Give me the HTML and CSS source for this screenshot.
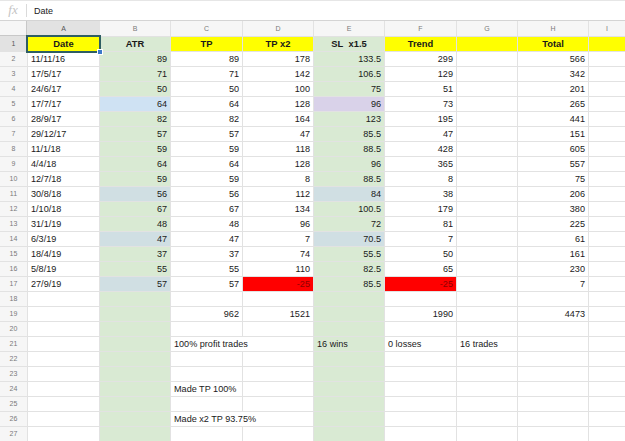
FILE: index.html
```html
<!DOCTYPE html>
<html lang="en">
  <head>
    <meta charset="UTF-8" />
    <meta name="viewport" content="width=device-width, initial-scale=1.0" />
    <title>Trades</title>
    <link rel="stylesheet" href="styles.css">
  </head>
  <body>
    <div class="formula-bar">
      <span class="fx">fx</span>
      <span class="formula-text">Date</span>
    </div>
    <div class="sheet"></div>
    <script>
      const cols = ["A", "B", "C", "D", "E", "F", "G", "H", "I"];

      const heading = ["Date", "ATR", "TP", "TP x2", "SL\u00a0\u00a0x1.5", "Trend", "", "Total", ""];

      const trades = [
        ["11/11/16", 89, 89, 178, 133.5, 299, "", 566],
        ["17/5/17", 71, 71, 142, 106.5, 129, "", 342],
        ["24/6/17", 50, 50, 100, 75, 51, "", 201],
        ["17/7/17", 64, 64, 128, 96, 73, "", 265],
        ["28/9/17", 82, 82, 164, 123, 195, "", 441],
        ["29/12/17", 57, 57, 47, 85.5, 47, "", 151],
        ["11/1/18", 59, 59, 118, 88.5, 428, "", 605],
        ["4/4/18", 64, 64, 128, 96, 365, "", 557],
        ["12/7/18", 59, 59, 8, 88.5, 8, "", 75],
        ["30/8/18", 56, 56, 112, 84, 38, "", 206],
        ["1/10/18", 67, 67, 134, 100.5, 179, "", 380],
        ["31/1/19", 48, 48, 96, 72, 81, "", 225],
        ["6/3/19", 47, 47, 7, 70.5, 7, "", 61],
        ["18/4/19", 37, 37, 74, 55.5, 50, "", 161],
        ["5/8/19", 55, 55, 110, 82.5, 65, "", 230],
        ["27/9/19", 57, 57, -25, 85.5, -25, "", 7],
      ];

      // summary block under the trades, keyed by row number
      const summary = {
        19: { C: 962, D: 1521, F: 1990, H: 4473 },
        21: { C: "100% profit trades", E: "16 wins", F: "0 losses", G: "16 trades" },
        24: { C: "Made TP 100%" },
        26: { C: "Made x2 TP 93.75%" },
      };

      // text that runs over the empty cell on its right
      const spans = { "21C": 2, "26C": 2 };

      const tones = {
        "5B": "blue",
        "11B": "slate",
        "14B": "slate",
        "17B": "slate",
        "5E": "lilac",
        "11E": "slate",
        "14E": "slate",
        "17D": "red",
        "17F": "red",
      };

      const sheet = document.querySelector(".sheet");

      const addCell = (text, cls) => {
        const cell = document.createElement("div");
        cell.className = cls;
        cell.textContent = text;
        sheet.appendChild(cell);
        return cell;
      };

      // column letters
      addCell("", "corner");
      cols.forEach((col) => addCell(col, col === "A" ? "col-head active" : "col-head"));

      for (let row = 1; row <= 27; row++) {
        addCell(row, row === 1 ? "row-head active" : "row-head");

        for (let i = 0; i < cols.length; i++) {
          const col = cols[i];
          const key = `${row}${col}`;
          let value = "";

          if (row === 1) {
            value = heading[i];
          } else if (row <= 17) {
            value = trades[row - 2][i] ?? "";
          } else if (summary[row]) {
            value = summary[row][col] ?? "";
          }

          let cls = "cell";
          if (row === 1) {
            cls += col === "B" || col === "E" ? " green title" : " yellow title";
          } else if (tones[key]) {
            cls += ` ${tones[key]}`;
          } else if (col === "B" || col === "E") {
            cls += " green";
          }
          if (typeof value === "number") cls += " num";
          if (spans[key]) cls += " span2";
          if (key === "1A") cls += " selected";

          addCell(value, cls);
          if (spans[key]) i += spans[key] - 1;
        }
      }
    </script>
  </body>
</html>
```

FILE: styles.css
```css
html,
body {
  margin: 0;
  background: #fff;
}
body {
  font-family: "Liberation Sans", Arial, sans-serif;
  overflow: hidden;
}

.formula-bar {
  box-sizing: border-box;
  height: 21px;
  border-top: 1px solid #e6e6e6;
  border-bottom: 1px solid #d4d4d4;
  display: flex;
  align-items: center;
  font-size: 9px;
  color: #222;
}
.fx {
  box-sizing: border-box;
  width: 27px;
  height: 13px;
  line-height: 12px;
  text-align: center;
  font-family: "Liberation Serif", serif;
  font-style: italic;
  font-size: 13px;
  color: #c4c4c4;
  border-right: 1px solid #dadada;
}
.formula-text {
  padding-left: 7px;
}

.sheet {
  display: grid;
  grid-template-columns: 27px 71px 70px 71px 70px 70px 71px 60px 70px 1fr;
  grid-template-rows: 15px;
  grid-auto-rows: 14px;
  gap: 1px;
  background: #e2e2e2;
  font-size: 9.1px;
  color: #1a1a1a;
}
.sheet > div {
  line-height: 14px;
  white-space: nowrap;
  overflow: hidden;
}

.corner,
.col-head,
.row-head {
  background: #f6f6f6;
  color: #7a7a7a;
  font-size: 7px;
  text-align: center;
}
.col-head {
  line-height: 15px !important;
}
.corner {
  box-shadow: inset -1px -1px 0 #c8c8c8;
}
.col-head.active,
.row-head.active {
  background: #e2e2e2;
  color: #555;
}

.cell {
  background: #fff;
  padding: 0 3px;
}
.cell.num {
  text-align: right;
}
.cell.title {
  font-weight: bold;
  text-align: center;
  font-size: 9.4px;
}
.cell.span2 {
  grid-column: span 2;
}

.yellow {
  background: #ffff00;
}
.green {
  background: #d9ead3;
}
.blue {
  background: #cfe2f3;
}
.slate {
  background: #d0dfe3;
}
.lilac {
  background: #d9d2e9;
}
.red {
  background: #ff0000;
  color: #8e0000;
}

.selected {
  position: relative;
  overflow: visible !important;
  outline: 2px solid #2e5e63;
  outline-offset: 0;
  z-index: 1;
}
.selected::after {
  content: "";
  position: absolute;
  right: -4px;
  bottom: -4px;
  width: 4px;
  height: 4px;
  background: #3b78c9;
  border: 1px solid #fff;
}
```
